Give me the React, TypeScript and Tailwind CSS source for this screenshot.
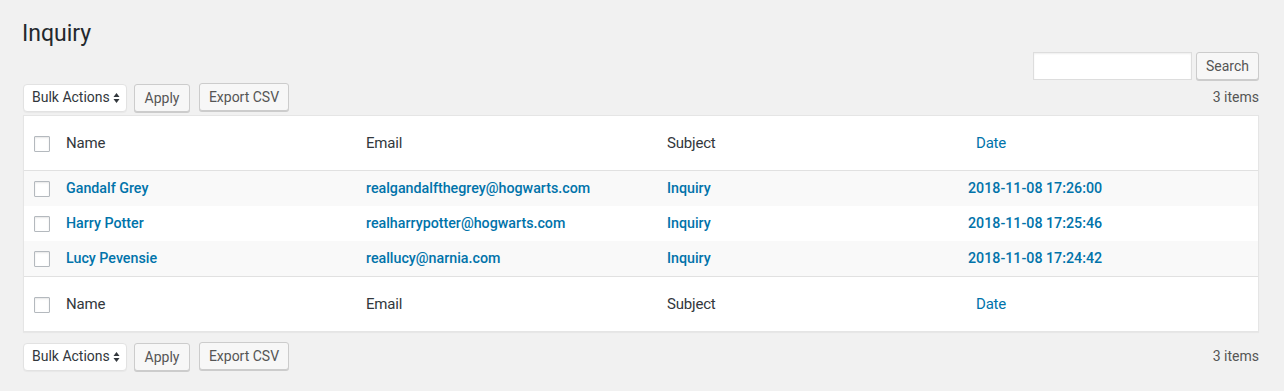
import React from 'react';

interface Entry {
  name: string;
  email: string;
  subject: string;
  date: string;
}

const entries: Entry[] = [
  { name: 'Gandalf Grey', email: 'realgandalfthegrey@hogwarts.com', subject: 'Inquiry', date: '2018-11-08 17:26:00' },
  { name: 'Harry Potter', email: 'realharrypotter@hogwarts.com', subject: 'Inquiry', date: '2018-11-08 17:25:46' },
  { name: 'Lucy Pevensie', email: 'reallucy@narnia.com', subject: 'Inquiry', date: '2018-11-08 17:24:42' },
];

const Checkbox = () => (
  <span className="block w-4 h-4 bg-white border border-[#b4b9be] rounded-[1px] shadow-[inset_0_1px_2px_rgba(0,0,0,0.1)]" />
);

const Button: React.FC<{ label: string; className?: string }> = ({ label, className }) => (
  <button
    className={`h-[28px] px-[8px] whitespace-nowrap bg-[#f7f7f7] border border-[#cccccc] rounded-[3px] shadow-[0_1px_0_#cccccc] text-[#555] text-[14px] leading-none ${className ?? ''}`}
  >
    {label}
  </button>
);

const BulkSelect = () => (
  <div className="h-[28px] w-[104px] flex items-center justify-between pl-[8px] pr-[6px] whitespace-nowrap bg-white border border-[#e2e2e2] rounded-[4px] shadow-[0_1px_1px_rgba(0,0,0,0.04)] text-[#32373c] text-[14px]">
    <span>Bulk Actions</span>
    <svg width="7" height="12" viewBox="0 0 7 12" className="text-[#32373c]">
      <path d="M3.5 1 L6.5 5 L0.5 5 Z" fill="currentColor" />
      <path d="M3.5 11 L6.5 7 L0.5 7 Z" fill="currentColor" />
    </svg>
  </div>
);

const TableNav = () => (
  <div className="flex items-center h-[29px]">
    <BulkSelect />
    <Button label="Apply" className="ml-[7px] w-[56px]" />
    <Button label="Export CSV" className="ml-[9px] w-[90px] -mt-[1px]" />
    <span className="ml-auto text-[14px] text-[#555]">3 items</span>
  </div>
);

const HeaderRow = ({ border }: { border: 'top' | 'bottom' }) => (
  <div
    className={`grid grid-cols-[42px_300px_301px_301px_1fr] items-center h-[55px] pt-[1px] text-[15px] tracking-[-0.2px] text-[#32373c] ${
      border === 'bottom' ? 'border-b border-[#e1e1e1]' : 'border-t border-[#e1e1e1]'
    }`}
  >
    <div className="pl-[10px]"><Checkbox /></div>
    <div>Name</div>
    <div>Email</div>
    <div>Subject</div>
    <div className="pl-[8px] text-[#0073aa]">Date</div>
  </div>
);

export default function App() {
  return (
    <div className="min-h-screen bg-[#f1f1f1] pl-[23px] pr-[25px] pt-[19px] font-['Roboto',sans-serif]">
      <h1 className="text-[23px] leading-[30px] text-[#23282d] -ml-[1px]">Inquiry</h1>

      <div className="flex justify-end mt-[3px]">
        <input className="w-[159px] h-[28px] bg-white border border-[#dddddd] shadow-[inset_0_1px_2px_rgba(0,0,0,0.07)] outline-none" />
        <Button label="Search" className="ml-[4px] w-[63px]" />
      </div>

      <div className="mt-[3px]">
        <TableNav />
      </div>

      <div className="mt-[3px] bg-white border border-[#e5e5e5] shadow-[0_1px_1px_rgba(0,0,0,0.04)]">
        <HeaderRow border="bottom" />
        {entries.map((e, i) => (
          <div
            key={e.email}
            className={`grid grid-cols-[42px_300px_301px_301px_1fr] items-center h-[35px] pt-[1px] text-[14.25px] font-medium text-[#0073aa] ${
              i % 2 === 0 ? 'bg-[#f9f9f9]' : 'bg-white'
            }`}
          >
            <div className="pl-[10px]"><Checkbox /></div>
            <div>{e.name}</div>
            <div>{e.email}</div>
            <div>{e.subject}</div>
            <div>{e.date}</div>
          </div>
        ))}
        <HeaderRow border="top" />
      </div>

      <div className="mt-[10px]">
        <TableNav />
      </div>
    </div>
  );
}
